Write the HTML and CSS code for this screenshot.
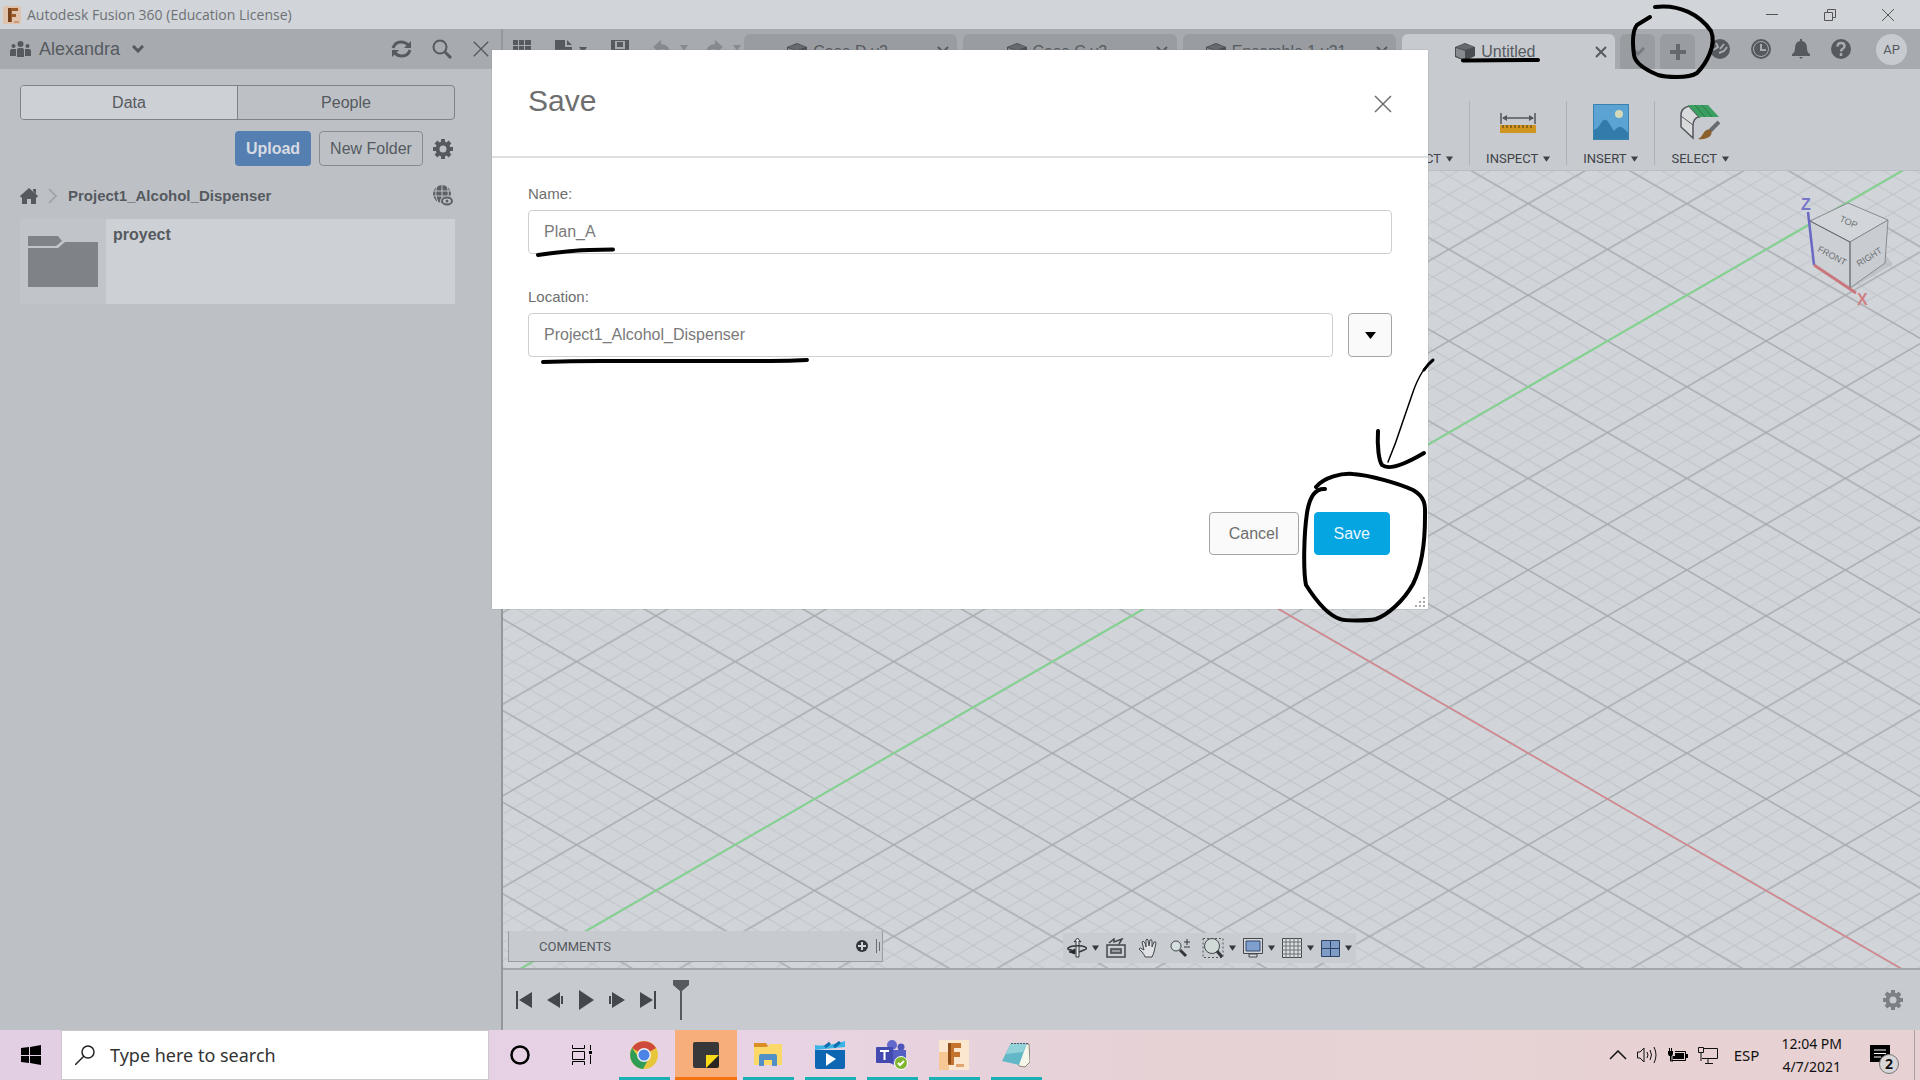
FILE: index.html
```html
<!DOCTYPE html>
<html lang="en">
<head>
  <meta charset="UTF-8" />
  <meta name="viewport" content="width=device-width, initial-scale=1.0" />
  <title>Autodesk Fusion 360 (Education License)</title>
  <link rel="stylesheet" href="styles.css">
</head>
<body>
  <svg class="defs" width="0" height="0">
    <symbol id="close" viewBox="0 0 20 20"><path d="M2 2l16 16M18 2L2 18" fill="none" stroke="currentColor" stroke-width="1.5"/></symbol>
    <symbol id="close-tab" viewBox="0 0 12 12"><path d="M1 1l10 10M11 1L1 11" fill="none" stroke="currentColor" stroke-width="2"/></symbol>
    <symbol id="caret" viewBox="0 0 8 6"><path d="M0 0h8L4 6z" fill="currentColor"/></symbol>
    <symbol id="cube" viewBox="0 0 20 18"><path d="M0 4L10 0l10 4v9l-10 5L0 14z" fill="#4a4e53"/><path d="M1 5l9 3v9l-9-4z" fill="#888c91"/><path d="M1 4l9-3 9 3-9 3z" fill="#666a6f"/></symbol>
    <symbol id="gear" viewBox="0 0 20 20"><circle cx="10" cy="10" r="5.5" fill="none" stroke="currentColor" stroke-width="4"/><path d="M10 0v4M10 16v4M0 10h4M16 10h4M3 3l3 3M14 14l3 3M17 3l-3 3M6 14l-3 3" stroke="currentColor" stroke-width="4"/></symbol>
  </svg>

  <header class="titlebar">
    <svg width="18" height="18" viewBox="0 0 18 18"><rect width="18" height="18" rx="2" fill="#dfc3ac"/><path d="M5 2h10v3H9v3h4v3H9v5H5z" fill="#995a2a"/><path d="M5 2h3v14H5z" fill="#77431f"/><path d="M11 15h5v2h-5z" fill="#c99b78"/></svg>
    <h1>Autodesk Fusion 360 (Education License)</h1>
    <div class="window-buttons">
      <button aria-label="Minimize"><svg width="12" height="12"><path d="M0 5.5h12" stroke="#555"/></svg></button>
      <button aria-label="Restore"><svg width="12" height="12" fill="none" stroke="#555"><path d="M.5 3.500h8v8h-8zM3.500 3V.5h8v8H9"/></svg></button>
      <button aria-label="Close"><svg width="12" height="12"><path d="M0 0l12 12M12 0L0 12" stroke="#555"/></svg></button>
    </div>
  </header>

  <div class="app">
    <aside class="data-panel">
      <div class="panel-head">
        <svg width="21" height="16" viewBox="0 0 21 16" fill="currentColor"><circle cx="10.500" cy="3" r="3"/><circle cx="3.500" cy="5" r="2"/><circle cx="17.500" cy="5" r="2"/><path d="M7 16V9q0-2 2-2h3q2 0 2 2v7zM0 15V10q0-2 2-2h4v7zM15 15V8h4q2 0 2 2v5z"/></svg>
        <button class="team">Alexandra <svg width="12" height="8"><path d="M1 1l5 5 5-5" fill="none" stroke="currentColor" stroke-width="3"/></svg></button>
        <button aria-label="Refresh" class="push"><svg width="21" height="18" viewBox="0 0 21 18" fill="none" stroke="currentColor" stroke-width="3"><path d="M2 8q2-6 8-6 5 0 8 4M19 10q-2 6-8 6-5 0-8-4"/><path d="M20 1v7h-7zM1 17v-7h7z" fill="currentColor" stroke="none"/></svg></button>
        <button aria-label="Search"><svg width="20" height="20" viewBox="0 0 20 20" fill="none" stroke="currentColor"><circle cx="8" cy="8" r="6.500" stroke-width="2"/><path d="M13 13l6 6" stroke-width="3"/></svg></button>
        <button aria-label="Close panel"><svg width="18" height="18"><use href="#close"/></svg></button>
      </div>
      <div class="panel-body">
        <div class="switch">
          <button class="on">Data</button>
          <button>People</button>
        </div>
        <div class="actions">
          <button class="upload">Upload</button>
          <button class="new-folder">New Folder</button>
          <button aria-label="Settings"><svg width="20" height="20"><use href="#gear"/></svg></button>
        </div>
        <div class="crumbs">
          <a href="#" aria-label="Home"><svg width="18" height="16" viewBox="0 0 18 16" fill="currentColor"><path d="M9 0l9 8-1 1.500h-1V16h-5v-5H7v5H2V9.500H1L0 8zM13 1h3v5l-3-3z"/></svg></a>
          <svg width="10" height="16"><path d="M1 1l7 7-7 7" fill="none" stroke="#a2a6aa" stroke-width="2"/></svg>
          <a href="#">Project1_Alcohol_Dispenser</a>
          <button aria-label="Open on the web" class="push"><svg width="21" height="21" viewBox="0 0 21 21"><circle cx="10" cy="9" r="9" fill="#5d6166"/><path d="M1 6h18M0 11h19M10 0v18M5 1q-3 8 1 16M15 1q3 8-1 16" fill="none" stroke="#bdc1c6"/><ellipse cx="15" cy="16" rx="7" ry="5" fill="#bdc1c6"/><ellipse cx="15" cy="16" rx="5" ry="3.500" fill="none" stroke="#5d6166" stroke-width="2"/><circle cx="15" cy="16" r="1.500" fill="#5d6166"/></svg></button>
        </div>
        <a href="#" class="folder">
          <span class="thumb"><svg width="70" height="51" viewBox="0 0 70 51" fill="#7f8286"><path d="M0 0h30l4 5-6 5H0zM0 12h30l7-6h33v45H0z"/></svg></span>
          <strong>proyect</strong>
        </a>
      </div>
    </aside>

    <main class="workspace">
      <div class="tabbar">
        <div class="quick">
          <button aria-label="Data panel"><svg width="18" height="18" fill="#565a5f"><path d="M0 0h5v5H0zM6 0h5v5H6zM12 0h6v5h-6zM0 6h5v5H0zM6 6h5v5H6zM12 6h6v5h-6zM0 12h5v5H0zM6 12h5v5H6zM12 12h6v5h-6z"/></svg></button>
          <button aria-label="File"><svg width="17" height="20" fill="#565a5f"><path d="M0 0h10v7h7v13H0zM12 0l5 5h-5z"/></svg><svg width="8" height="6"><use href="#caret"/></svg></button>
          <button aria-label="Save file"><svg width="18" height="18" fill="#565a5f"><path d="M0 0h18v18H0z"/><path d="M4 1h10v8H4z" fill="#a7abb0"/><path d="M6 2h6v5H6z"/></svg></button>
          <button aria-label="Undo" class="dim"><svg width="17" height="16"><path d="M0 7l8-7v4q9 0 9 11-3-6-9-6v5z" fill="currentColor"/></svg><svg width="8" height="6"><use href="#caret"/></svg></button>
          <button aria-label="Redo" class="dim"><svg width="17" height="16"><path d="M17 7L9 0v4Q0 4 0 15q3-6 9-6v5z" fill="currentColor"/></svg><svg width="8" height="6"><use href="#caret"/></svg></button>
        </div>
        <div class="tabs">
          <div class="tab"><svg width="20" height="18"><use href="#cube"/></svg><span>Case D v2</span><button aria-label="Close tab"><svg width="12" height="12"><use href="#close-tab"/></svg></button></div>
          <div class="tab"><svg width="20" height="18"><use href="#cube"/></svg><span>Case C v2</span><button aria-label="Close tab"><svg width="12" height="12"><use href="#close-tab"/></svg></button></div>
          <div class="tab"><svg width="20" height="18"><use href="#cube"/></svg><span>Ensamble 1 v21</span><button aria-label="Close tab"><svg width="12" height="12"><use href="#close-tab"/></svg></button></div>
          <div class="tab active"><svg width="20" height="18"><use href="#cube"/></svg><span>Untitled</span><button aria-label="Close tab"><svg width="12" height="12"><use href="#close-tab"/></svg></button></div>
          <button class="mini" aria-label="Tab list"><svg width="14" height="10"><path d="M1 1l6 6 6-6" fill="none" stroke="#777b80" stroke-width="3"/></svg></button>
          <button class="mini" aria-label="New tab"><svg width="16" height="16"><path d="M8 0v16M0 8h16" stroke="#65696e" stroke-width="4"/></svg></button>
        </div>
        <div class="status">
          <button aria-label="Extensions"><svg width="20" height="20" viewBox="0 0 20 20"><circle cx="10" cy="10" r="10" fill="#565a5f"/><path d="M6 4l2 4-5 3M9 14l5-2 3-4M10 10l4-5" fill="none" stroke="#a7abb0" stroke-width="2"/></svg></button>
          <button aria-label="Job status"><svg width="20" height="20" viewBox="0 0 20 20"><circle cx="10" cy="10" r="10" fill="#565a5f"/><circle cx="10" cy="10" r="7.500" fill="none" stroke="#a7abb0"/><path d="M10 5v6h5" fill="none" stroke="#a7abb0" stroke-width="2"/></svg></button>
          <button aria-label="Notifications"><svg width="18" height="20" viewBox="0 0 18 20" fill="#565a5f"><path d="M8 0h2v2q5 1 5 7 0 5 3 6v2H0v-2q3-1 3-6 0-6 5-7zM7 18h4l-2 2z"/></svg></button>
          <button aria-label="Help"><svg width="20" height="20" viewBox="0 0 20 20"><circle cx="10" cy="10" r="10" fill="#565a5f"/><path d="M6.500 7.500q0-3.500 3.500-3.500t3.500 3q0 2-2 3-1.500 1-1.500 2.500M10 14v3" fill="none" stroke="#a7abb0" stroke-width="2.500"/></svg></button>
          <button class="avatar">AP</button>
        </div>
      </div>

      <div class="ribbon">
        <div class="group">
          <svg width="36" height="36"></svg>
          <button>CONSTRUCT <svg width="7" height="6"><use href="#caret"/></svg></button>
        </div>
        <div class="group">
          <svg width="36" height="36" viewBox="0 0 36 36"><path d="M1 9v11M35 9v11M3 14h30" stroke="#54585c" stroke-width="1.500"/><path d="M2 14l5-3v6zM34 14l-5-3v6z" fill="#54585c"/><path d="M0 21h36v8H0z" fill="#cf951f"/><path d="M3 21v3M7 21v3M11 21v3M15 21v3M19 21v3M23 21v3M27 21v3M31 21v3" stroke="#7a5a18" stroke-width="1.500"/></svg>
          <button>INSPECT <svg width="7" height="6"><use href="#caret"/></svg></button>
        </div>
        <div class="group">
          <svg width="36" height="36" viewBox="0 0 36 36"><path d="M0 0h36v36H0z" fill="#5ba3d3"/><path d="M0 26q5-1 8-7 4-7 8 0l5 8q4-5 7-4t8 7v6H0z" fill="#327cac"/><circle cx="26" cy="10" r="4" fill="#d6d9b8"/><path d="M.5.5h35v35H.5z" fill="none" stroke="#3d81ad"/></svg>
          <button>INSERT <svg width="7" height="6"><use href="#caret"/></svg></button>
        </div>
        <div class="group">
          <svg width="40" height="36" viewBox="0 0 40 36"><path d="M1 23V10Q2 3 8 1h5v33z" fill="#d8dadc"/><path d="M13 34V22q0-8 6-9L9 2Q1 4 1 11v12z" fill="#d8dadc" stroke="#54585c" stroke-width="1.500"/><path d="M1 12l12 9" stroke="#54585c"/><path d="M8 1h20l11 12H19z" fill="#3a9f60"/><path d="M15 1l10 12M22 1l10 12" stroke="#2d7c4b"/><path d="M39 18l-9 9" stroke="#686c70" stroke-width="4"/><path d="M31 26q2 6-4 8-5 2-9 1 3-1 5-5 3-6 8-4z" fill="#8c602c"/></svg>
          <button>SELECT <svg width="7" height="6"><use href="#caret"/></svg></button>
        </div>
      </div>

      <div class="canvas">
        <!-- isometric floor grid, origin where the axes meet -->
        <svg class="grid" width="100%" height="100%">
          <defs>
            <pattern id="minor" x="708" y="399" width="31.72" height="18.32" patternUnits="userSpaceOnUse"><path d="M0 0l31.72 18.32M31.72 0L0 18.32" stroke="#bec2c6" stroke-width="1"/></pattern>
            <pattern id="major" x="708" y="399" width="158.6" height="91.6" patternUnits="userSpaceOnUse"><path d="M0 0l158.6 91.6M158.6 0L0 91.6" stroke="#a7abaf" stroke-width="1.400"/></pattern>
          </defs>
          <rect width="100%" height="100%" fill="url(#minor)"/>
          <rect width="100%" height="100%" fill="url(#major)"/>
          <path d="M-85 857L1501-59" stroke="#83d38f" stroke-width="2"/>
          <path d="M708 399l1586 916" stroke="#d7858b" stroke-width="1.500"/>
        </svg>
        <svg class="viewcube" width="110" height="130" viewBox="0 0 110 130">
          <path d="M32 87l35 32 44-26-10-12z" fill="#b3b7bb" opacity=".6"/>
          <path d="M28 50l40 21v46l-36-25z" fill="#ccd0d4"/>
          <path d="M28 50l38-18 40 17-38 22z" fill="#d2d5d9" stroke="#888c90"/>
          <path d="M68 71l38-22-3 43-35 25z" fill="#c9cdd1" stroke="#888c90"/>
          <path d="M28 50l40 21v46" fill="none" stroke="#666a6e"/>
          <path d="M26 41l6 53" stroke="#6969c4" stroke-width="2.500"/>
          <path d="M32 94l42 28" stroke="#c9777d" stroke-width="3"/>
          <text x="57" y="50" transform="rotate(24 57 50)">TOP</text>
          <text x="35" y="80" transform="rotate(28 35 80)">FRONT</text>
          <text x="77" y="96" transform="rotate(-32 77 96)">RIGHT</text>
          <text class="z" x="19" y="39">Z</text>
          <text class="x" x="75" y="134">X</text>
        </svg>
        <div class="comments">
          <span>COMMENTS</span>
          <button aria-label="Add comment"><svg width="12" height="12"><circle cx="6" cy="6" r="6" fill="#33373b"/><path d="M6 2v8M2 6h8" stroke="#d1d5da" stroke-width="2"/></svg></button>
          <svg width="4" height="16"><path d="M.5 1v14M3.500 4v9" stroke="#686c70"/></svg>
        </div>
        <div class="navbar">
          <button class="menu" aria-label="Orbit"><svg width="20" height="20" viewBox="0 0 20 20" fill="none" stroke="#33373b"><path d="M9 3v16h3V3l2 1-3.500-4L7 4z" fill="#e3e5e8"/><path d="M5 12q-5 0-4-2 4-3 14-2 8 2 2 4l-5 2" stroke-width="1.500"/><path d="M2 14l6-3v5z" fill="#222"/></svg><svg width="7" height="6"><use href="#caret"/></svg></button>
          <button aria-label="Look at"><svg width="20" height="20" viewBox="0 0 20 20" fill="none" stroke="#44484c" stroke-width="1.500"><path d="M1 7h18v12H1zM3 5l5-4v3l8-3-3 5"/><path d="M5 11h10v4H5z" fill="#9a9ea3"/></svg></button>
          <button aria-label="Pan"><svg width="20" height="20" viewBox="0 0 20 20"><path d="M7 19q-1-3-3-5l-3-3q1-2 3 0l2 1-2-8q1-2 3 1l1 4V2q1-2 2 0l1 6 1-6q2-1 2 1v6l2-5q2-1 2 1l-2 9q-1 3-2 5z" fill="#dfe1e4" stroke="#44484c"/></svg></button>
          <button aria-label="Zoom"><svg width="20" height="20" viewBox="0 0 20 20"><circle cx="6" cy="8" r="5" fill="#d5dedf" stroke="#44484c"/><path d="M10 12l6 6" stroke="#33373b" stroke-width="3"/><path d="M14 4h6M17 1v6M14 9h6" stroke="#33373b"/></svg></button>
          <button class="menu" aria-label="Fit"><svg width="22" height="20" viewBox="0 0 22 20"><path d="M1 .5h20v19H1z" fill="none" stroke="#55595d" stroke-dasharray="2 2"/><circle cx="10" cy="8" r="7.500" fill="#d0dbd7" stroke="#44484c"/><path d="M15 13l5 6" stroke="#33373b" stroke-width="3"/></svg><svg width="7" height="6"><use href="#caret"/></svg></button>
          <button class="menu" aria-label="Display"><svg width="20" height="20" viewBox="0 0 20 20"><path d="M.5.5h19v15H.5zM6 16h8v3H6z" fill="#d3d6da" stroke="#44484c"/><path d="M3 3h14v10H3z" fill="#7f9fce" stroke="#34486a"/></svg><svg width="7" height="6"><use href="#caret"/></svg></button>
          <button class="menu" aria-label="Grid"><svg width="20" height="20" viewBox="0 0 20 20"><path d="M.5.5h19v19H.5z" fill="#dcdfe2" stroke="#44484c"/><path d="M4 0v20M8 0v20M12 0v20M16 0v20M0 4h20M0 8h20M0 12h20M0 16h20" stroke="#6c7074"/></svg><svg width="7" height="6"><use href="#caret"/></svg></button>
          <button aria-label="Viewports"><svg width="19" height="17" viewBox="0 0 19 17"><path d="M.5.5h18v16H.5zM9.500 0v17M0 8.500h19" fill="#7f9cc6" stroke="#2f4263"/></svg><svg width="7" height="6"><use href="#caret"/></svg></button>
        </div>
      </div>

      <div class="timeline">
        <button aria-label="Start"><svg width="16" height="18"><path d="M0 0h2v18H0zM16 1v16L3 9z"/></svg></button>
        <button aria-label="Step back"><svg width="16" height="18"><path d="M13 1v16L0 9zM14 5h2v8h-2z"/></svg></button>
        <button aria-label="Play"><svg width="16" height="20"><path d="M1 0v20l15-10z"/></svg></button>
        <button aria-label="Step forward"><svg width="16" height="18"><path d="M3 1v16l13-8zM0 5h2v8H0z"/></svg></button>
        <button aria-label="End"><svg width="16" height="18"><path d="M14 0h2v18h-2zM0 1v16l13-8z"/></svg></button>
        <svg class="marker" width="16" height="40"><path d="M0 0h16v5l-7 6v29H7V11L0 5z"/></svg>
        <button aria-label="Timeline settings" class="push"><svg width="20" height="20"><use href="#gear"/></svg></button>
      </div>
    </main>
  </div>

  <footer class="taskbar">
    <button class="start" aria-label="Start menu"><svg width="20" height="20"><path d="M0 3l8-1v8H0zM9 2l11-2v10H9zM0 11h8v7l-8-1zM9 11h11v9L9 18z"/></svg></button>
    <label class="search">
      <svg width="20" height="20" fill="none" stroke="#222" stroke-width="1.500"><circle cx="13" cy="7" r="6"/><path d="M9 11l-9 9"/></svg>
      <input type="text" placeholder="Type here to search" aria-label="Type here to search">
    </label>
    <button class="task" aria-label="Cortana"><svg width="20" height="20"><circle cx="10" cy="10" r="8.500" fill="none" stroke="#000" stroke-width="2.500"/></svg></button>
    <button class="task" aria-label="Task view"><svg width="22" height="20" fill="none" stroke="#000"><path d="M1.500 0v3.500h12V0M1.500 6.500h12v8h-12zM1.500 20v-3.500h12V20M19.500 0v5M19.500 10v9"/><path d="M18 6h3v3h-3z" fill="#000" stroke="none"/></svg></button>
    <button class="task open" aria-label="Chrome"><svg width="28" height="28" viewBox="0 0 28 28"><circle cx="14" cy="14" r="14" fill="#e8c63c"/><path d="M14 14L2 7A14 14 0 0 1 26 7z" fill="#cf493d"/><path d="M2 7a14 14 0 0 0 11 21l6-11-10 0z" fill="#2f9d58"/><circle cx="14" cy="14" r="7" fill="#eef0f2"/><circle cx="14" cy="14" r="5.500" fill="#4b84e6"/></svg></button>
    <button class="task open notes" aria-label="Sticky Notes"><svg width="26" height="26"><path d="M2 0h22q2 0 2 2v12L14 26H2q-2 0-2-2V2q0-2 2-2z" fill="#38383a"/><path d="M13 13h13v11q0 2-2 2H13z" fill="#f8da18"/><path d="M26 13L13 26h11q2 0 2-2z" fill="#292622"/></svg></button>
    <button class="task open" aria-label="File Explorer"><svg width="28" height="26"><path d="M0 1h12l2 3-2 3H0z" fill="#d98f24"/><path d="M0 5h13l3-3h12v21H0z" fill="#fcd869"/><path d="M5 24V14q0-2 2-2h14q2 0 2 2v10h-5v-6h-8v6z" fill="#5090c6"/></svg></button>
    <button class="task open" aria-label="Video Editor"><svg width="30" height="28"><path d="M0 4q10 2 30-4v6L0 9z" fill="#3cb3e5"/><path d="M0 9h30v17q0 2-2 2H2q-2 0-2-2z" fill="#0c66b2"/><path d="M10 6l5-4M19 6l6-5" stroke="#106cae" stroke-width="3"/><path d="M11 12l10 6-10 7z" fill="#fff"/></svg></button>
    <button class="task open" aria-label="Teams"><svg width="32" height="30"><circle cx="16" cy="5" r="5" fill="#6269cd"/><circle cx="25" cy="7" r="3.500" fill="#4d55b8"/><path d="M11 10h19v10q-2 5-8 5-9 0-11-6z" fill="#565fc4"/><rect y="7" width="17" height="16" rx="1" fill="#434aaf"/><path d="M4 11h9M8.500 11v9" stroke="#fff" stroke-width="2"/><circle cx="25" cy="23" r="6.500" fill="#80b52e" stroke="#fff"/><path d="M22 23l2 2 4-4" fill="none" stroke="#fff" stroke-width="2"/></svg></button>
    <button class="task open" aria-label="Fusion 360"><svg width="30" height="30"><path d="M0 0h30v30H0z" fill="#fbe6d0"/><path d="M0 12h10v18H0z" fill="#f8c894"/><path d="M9 3h13v5h-7v4h6v5h-6v8H9z" fill="#c57430"/><path d="M9 3h3v22l-3-2z" fill="#914d1a"/><path d="M17 24h8v3h-8z" fill="#e3a671"/></svg></button>
    <button class="task open" aria-label="Notepad"><svg width="28" height="26"><path d="M10 2h17l1 18-5 5-6-1z" fill="#f6f5ea" stroke="#8d8778"/><path d="M9 1h16l-8 22-17-4z" fill="#62b8c6"/><path d="M9 1h16l-4 9-17 2z" fill="#94d2da"/><path d="M9 1.500h17" stroke="#556" stroke-dasharray="2 1"/></svg></button>
    <div class="tray">
      <svg width="18" height="10"><path d="M1 9l8-8 8 8" fill="none" stroke="#111" stroke-width="1.500"/></svg>
      <svg width="21" height="18" fill="none" stroke="#111"><path d="M.5 6v6H3l4 4V2L3 6zM10 6q2 3 0 6M13 4q3 5 0 10M17 1q4 8 0 16"/></svg>
      <svg width="20" height="14"><path d="M7 3.500h10.500v9H4V8" fill="none" stroke="#000"/><path d="M7 5h9v6H5V8h2zM18 6h2v4h-2zM0 3h5v3L4 8H1L0 6z"/><path d="M1.500 0v3M3.500 0v3M2.500 8v5H5" fill="none" stroke="#000"/></svg>
      <svg width="20" height="17" fill="none" stroke="#111"><path d="M5 1.500h14.500v10H4M.5.5h5v5h-5zM3 5v9M10 12v4M7 16.500h8"/></svg>
      <span class="lang">ESP</span>
      <time>12:04 PM<br>4/7/2021</time>
      <button class="alerts" aria-label="Notifications"><svg width="20" height="21"><path d="M0 0h20v17h-7l-3 4v-4H0z"/><path d="M4 5h12M4 8.500h12M4 12h7" stroke="#fff"/></svg><span class="badge">2</span></button>
    </div>
  </footer>

  <form class="dialog" role="dialog" aria-labelledby="dialog-title">
    <div class="dialog-head">
      <h2 id="dialog-title">Save</h2>
      <button type="button" aria-label="Close dialog"><svg width="20" height="20"><use href="#close"/></svg></button>
    </div>
    <div class="dialog-body">
      <label for="name">Name:</label>
      <div class="row"><input id="name" type="text" value="Plan_A"></div>
      <label for="location">Location:</label>
      <div class="row">
        <input id="location" type="text" value="Project1_Alcohol_Dispenser">
        <button type="button" class="drop" aria-label="Choose location"><svg width="11" height="7" viewBox="0 0 8 6" preserveAspectRatio="none"><path d="M0 0h8L4 6z"/></svg></button>
      </div>
    </div>
    <div class="dialog-foot">
      <button type="button">Cancel</button>
      <button type="button" class="primary">Save</button>
    </div>
    <svg class="grip" width="11" height="11" fill="#aaa"><path d="M8 0h2v2H8zM4 4h2v2H4zM8 4h2v2H8zM0 8h2v2H0zM4 8h2v2H4zM8 8h2v2H8z"/></svg>
  </form>

  <!-- pen marks over the screen -->
  <svg class="ink" width="1920" height="1080" fill="none" stroke="#000" stroke-width="4" stroke-linecap="round" stroke-linejoin="round">
    <path d="M538 255Q575 250 590 250L613 249.500"/>
    <path d="M543 362Q570 361 600 361L770 361Q790 361 807 360"/>
    <path d="M1463 60.500L1538 60"/>
    <path d="M1655 7C1680 4 1700 15 1711 31C1717 45 1706 64 1697 73C1688 79 1665 77 1658 75C1646 70 1635 63 1634 55C1632 40 1633 30 1637 25L1650 17"/>
    <path d="M1433 360Q1421 369 1413 392L1403 421Q1396 443 1388 462" stroke-width="1.500"/>
    <path d="M1433 360Q1428 364 1424 370" stroke-width="3"/>
    <path d="M1378 431C1377 447 1379 461 1382 465C1388 470 1402 466 1424 453"/>
    <path d="M1316 487C1324 477 1342 473 1353 474C1370 475 1400 484 1413 490C1427 498 1425 508 1425 517C1425 540 1422 566 1413 584C1403 602 1387 615 1376 619C1367 621 1344 621 1340 619C1327 615 1313 596 1306 585C1303 570 1304 533 1307 513C1309 500 1314 488 1325 489"/>
  </svg>
</body>
</html>
```
FILE: styles.css
```css
:root {
  --title: #d1d5da;
  --bar: #a7abb0;
  --panel: #bdc1c6;
  --ribbon: #c7cacf;
  --ink: #565a5f;
  --teal: #1ab0b6;
}
* {
  margin: 0; padding: 0; box-sizing: border-box;
}
body {
  height: 100vh;
  display: flex;
  flex-direction: column;
  overflow: hidden;
  font: 16px "Liberation Sans", Arial, sans-serif;
  color: var(--ink);
}
button {
  font: inherit;
  color: inherit;
  background: none;
  border: none;
  display: flex;
  align-items: center;
  justify-content: center;
}
a { color: inherit; text-decoration: none; }
svg { display: block; flex: none; }
.defs { position: absolute; }
.push { margin-left: auto; }

.titlebar {
  height: 29px;
  flex: none;
  background: var(--title);
  display: flex;
  align-items: center;
  padding: 0 3px;
  gap: 6px;
}
.titlebar h1 {
  font: 14px "Open Sans", sans-serif;
  color: #6e7175;
}
.window-buttons {
  margin-left: auto;
  display: flex;
}
.window-buttons button { width: 58px; height: 28px; }

.app {
  flex: 1;
  min-height: 0;
  display: flex;
}

.data-panel {
  width: 503px;
  flex: none;
  background: var(--panel);
  border-right: 2px solid #94989d;
}
.panel-head {
  height: 40px;
  background: var(--bar);
  display: flex;
  align-items: center;
  gap: 20px;
  padding: 0 11px 0 10px;
}
.team {
  font-size: 18px;
  gap: 12px;
  margin-left: -12px;
}
.panel-body { padding: 16px 46px 0 20px; }
.switch {
  display: flex;
  height: 35px;
  border: 1px solid #7f8388;
  border-radius: 4px;
}
.switch button { flex: 1; }
.switch .on {
  background: #cdd0d5;
  border-right: 1px solid #7f8388;
  border-radius: 3px 0 0 3px;
}
.actions {
  display: flex;
  justify-content: flex-end;
  gap: 8px;
  margin-top: 11px;
  padding-right: 2px;
}
.upload, .new-folder {
  height: 35px;
  border-radius: 4px;
}
.upload {
  width: 76px;
  background: #557fb1;
  color: #d7dbe1;
  font-weight: bold;
}
.new-folder {
  width: 104px;
  border: 1px solid #888c91;
  margin-right: 2px;
}
.crumbs {
  display: flex;
  align-items: center;
  gap: 10px;
  height: 47px;
  margin-top: 6px;
  padding-right: 2px;
  font-size: 15px;
  font-weight: bold;
}
.folder {
  display: flex;
  height: 85px;
  background: #cdd0d5;
}
.folder .thumb {
  width: 86px;
  background: #c1c4c9;
  display: flex;
  align-items: center;
  justify-content: center;
}
.folder strong { padding: 7px; }

.workspace {
  flex: 1;
  min-width: 0;
  display: flex;
  flex-direction: column;
}
.tabbar {
  height: 40px;
  background: var(--bar);
  display: flex;
}
.quick {
  width: 241px;
  flex: none;
  display: flex;
  align-items: flex-start;
  gap: 24px;
  padding: 11px 0 0 10px;
}
.quick button { gap: 7px; }
.quick .dim { color: #868a8f; gap: 10px; margin-right: -6px; }
.tabs {
  flex: 1;
  display: flex;
  align-items: flex-end;
  gap: 6px;
}
.tab {
  flex: 1;
  height: 35px;
  background: #999da2;
  border-radius: 6px 6px 0 0;
  display: flex;
  align-items: center;
  gap: 6px;
  padding-right: 8px;
}
.tab > svg { margin-left: auto; }
.tab span { white-space: nowrap; }
.tab button { margin-left: auto; }
.tab.active { background: var(--ribbon); }
.mini {
  width: 35px;
  height: 35px;
  background: #999da2;
  border-radius: 6px 6px 0 0;
  margin-left: -1px;
}
.status {
  display: flex;
  align-items: center;
  gap: 21px;
  padding: 0 13px 0 15px;
}
.avatar {
  width: 31px;
  height: 31px;
  border-radius: 50%;
  background: #c7cacf;
  font: 13px Roboto, sans-serif;
  margin-left: 4px;
}

.ribbon {
  height: 102px;
  flex: none;
  background: var(--ribbon);
  border-bottom: 1px solid #babec2;
  display: flex;
  justify-content: flex-end;
  padding: 32px 175px 0 0;
}
.group {
  height: 64px;
  padding: 3px 16px 0;
  display: flex;
  flex-direction: column;
  align-items: center;
  gap: 11px;
  border-right: 1px solid #b0b4b8;
}
.group:last-child { border: none; }
.group button {
  font: 13px/16px Roboto, sans-serif;
  color: #3f4347;
  gap: 5px;
}

.canvas {
  flex: 1;
  min-height: 0;
  position: relative;
  background: var(--title);
  overflow: hidden;
}
.viewcube {
  position: absolute;
  top: 0;
  right: 28px;
  overflow: visible;
}
.viewcube text {
  font: 9px "Liberation Sans", sans-serif;
  fill: #6c7074;
}
.viewcube .z { font-size: 16px; font-weight: bold; fill: #7777c8; }
.viewcube .x { font-size: 16px; font-weight: bold; fill: #cf7f86; }
.comments {
  position: absolute;
  left: 5px;
  bottom: 6px;
  width: 375px;
  height: 31px;
  background: var(--ribbon);
  border: solid #999da2;
  border-width: 0 1px 1px;
  display: flex;
  align-items: center;
  gap: 8px;
  padding: 0 2px 0 30px;
  font: 13px Roboto, sans-serif;
}
.comments span { flex: 1; }
.navbar {
  position: absolute;
  left: 560px;
  bottom: 5px;
  height: 30px;
  background: #c9ccd1;
  color: #33373b;
  display: flex;
  align-items: center;
  gap: 12px;
  padding: 0 4px;
}
.navbar button { gap: 5px; }
.navbar .menu { margin-right: -5px; }
.timeline {
  height: 62px;
  flex: none;
  background: var(--ribbon);
  border-top: 2px solid #a3a7ab;
  display: flex;
  align-items: center;
  gap: 15px;
  padding: 0 17px 0 13px;
  fill: #44484c;
}
.timeline .marker { margin-left: 2px; fill: #565a5f; }
.timeline .push { color: #7c8084; }

.taskbar {
  height: 50px;
  flex: none;
  display: flex;
  background: linear-gradient(90deg, #e2cfe4 0%, #e8d3e4 40%, #e6d2d5 60%, #e8d1d2 100%);
  font: 16px "Noto Sans", sans-serif;
  color: #111;
}
.start { width: 61px; }
.search {
  width: 428px;
  background: #fff;
  border: 1px solid #ccc6cd;
  display: flex;
  align-items: center;
  gap: 15px;
  padding-left: 13px;
}
.search input {
  flex: 1;
  border: none;
  outline: none;
  font: 18px "Noto Sans", sans-serif;
}
.search input::placeholder { color: #333; opacity: 1; }
.task { width: 62px; }
.open {
  background: linear-gradient(var(--teal), var(--teal)) center bottom / 51px 3px no-repeat;
}
.notes {
  background: #f8ae7a;
  border-bottom: 3px solid #f4720f;
  border-top: 3px solid #f8ae7a;
}
.tray {
  margin-left: auto;
  display: flex;
  align-items: center;
  gap: 10px;
  padding-right: 5px;
}
.lang { margin: 0 12px 0 6px; font-size: 15px; }
.tray time {
  font-size: 14px;
  line-height: 23px;
  text-align: center;
}
.alerts {
  position: relative;
  height: 50px;
  padding: 0 24px 0 18px;
  border-right: 1px solid #a99fa4;
}
.badge {
  position: absolute;
  left: 27px;
  top: 24px;
  width: 20px;
  height: 20px;
  border: 1px solid #777;
  border-radius: 50%;
  background: #d8d6d7;
  font: bold 14px/18px "Noto Sans", sans-serif;
}

.dialog {
  position: absolute;
  top: 50px;
  left: 0;
  right: 0;
  width: 936px;
  margin: 0 auto;
  background: #fff;
  color: #6e6e6e;
  box-shadow: 0 0 1px #888;
}
.dialog-head {
  height: 108px;
  border-bottom: 2px solid #dedfe0;
  display: flex;
  align-items: flex-start;
  justify-content: space-between;
  padding: 34px 35px 0 36px;
}
.dialog-head h2 {
  font-size: 30px;
  font-weight: normal;
  line-height: 34px;
}
.dialog-head button { margin-top: 10px; }
.dialog-body {
  padding: 26px 36px 0;
}
.dialog-body label {
  display: block;
  font-size: 15px;
  line-height: 19px;
  margin-bottom: 7px;
}
.row {
  display: flex;
  gap: 15px;
  height: 44px;
  margin-bottom: 33px;
}
.row input {
  flex: 1;
  border: 1px solid #cfcfcf;
  border-radius: 4px;
  padding: 0 15px;
  font: 16px "Liberation Sans", Arial, sans-serif;
  color: #7a7a7a;
}
.drop {
  width: 44px;
  border: 1px solid #a5a5a5;
  border-radius: 4px;
  background: #fafafa;
}
.dialog-foot {
  display: flex;
  justify-content: flex-end;
  gap: 15px;
  padding: 122px 38px 54px;
}
.dialog-foot button {
  height: 43px;
  padding: 0 19px;
  border: 1px solid #a5a5a5;
  border-radius: 4px;
  background: #fafafa;
}
.dialog-foot .primary {
  background: #05a5e1;
  border-color: #05a5e1;
  color: #e8f7fd;
}
.grip {
  position: absolute;
  right: 2px;
  bottom: 1px;
}
.ink {
  position: absolute;
  left: 0;
  top: 0;
  pointer-events: none;
}
```
